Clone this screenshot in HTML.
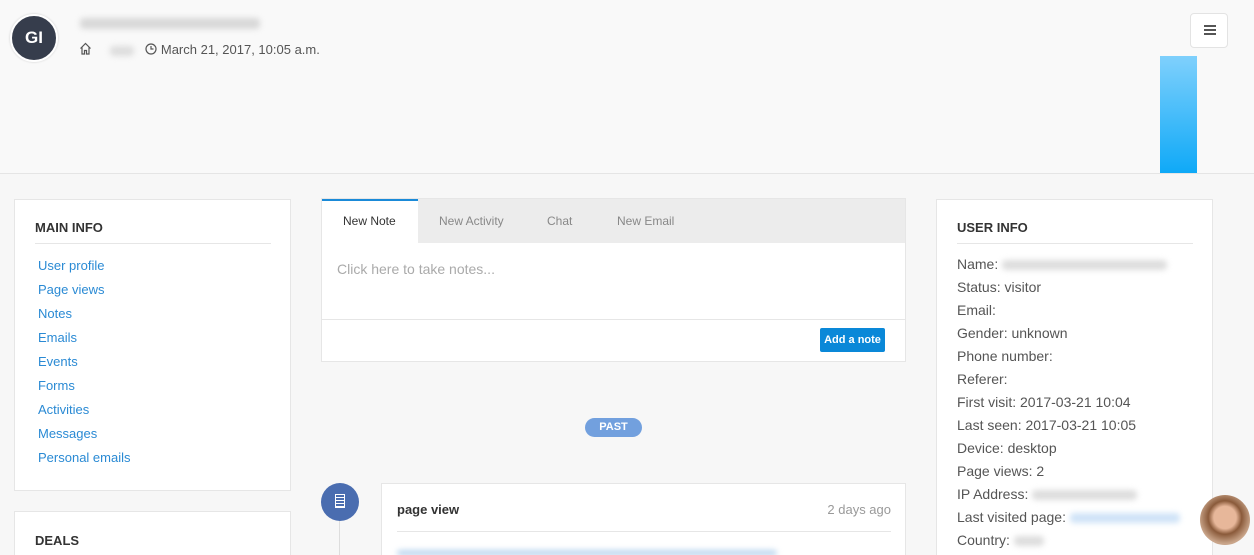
<!DOCTYPE html><html><head><style>
html,body{margin:0;width:1254px;height:555px;overflow:hidden}
body{background:#f7f7f7;font-family:"Liberation Sans",sans-serif;position:relative}
*{box-sizing:border-box}
.a{position:absolute}
.panel{position:absolute;background:#fff;border:1px solid #e6e6e6}
.blur{display:inline-block;background:#ddd;filter:blur(3px);border-radius:4px;vertical-align:middle}
.links div{color:#2a8ad4;font-size:13px;height:24px}
.info div{color:#555;font-size:14px;height:23px}
.t{font-size:13px;font-weight:bold;color:#333}
</style></head><body>
<div class="a" style="left:0;top:0;width:1254px;height:174px;background:#f9f9f9;border-bottom:1px solid #e5e5e5"></div>
<div class="a" style="left:10px;top:14px;width:48px;height:48px;border-radius:50%;background:#363d4c;border:2px solid #fff;box-shadow:0 0 2px #ccc;color:#fff;font-weight:bold;font-size:17px;line-height:44px;text-align:center">GI</div>
<div class="a blur" style="left:80px;top:18px;width:180px;height:11px;background:#d8d8d8"></div>
<div class="a" style="left:79px;top:42px;font-size:13px;color:#555">
<svg width="13" height="13" viewBox="0 0 13 13" style="vertical-align:-1px"><path d="M1.5 6.5L6.5 1.5L11.5 6.5M3 5.5V12H5.5V8.5H7.5V12H10V5.5" fill="none" stroke="#555" stroke-width="1.2"/></svg>
<span class="blur" style="width:24px;height:10px;margin:0 8px 0 14px"></span>
<svg width="12" height="12" viewBox="0 0 12 12" style="vertical-align:-1px"><circle cx="6" cy="6" r="5" fill="none" stroke="#555" stroke-width="1.2"/><path d="M6 3V6H8.5" fill="none" stroke="#555" stroke-width="1.2"/></svg>
March 21, 2017, 10:05 a.m.</div>
<div class="a" style="left:1190px;top:13px;width:38px;height:35px;background:#fff;border:1px solid #e3e3e3;border-radius:4px"><div style="margin:11px 0 0 13px;width:12px;height:2px;background:#555;box-shadow:0 4px #555,0 8px #555"></div></div>
<div class="a" style="left:1160px;top:56px;width:37px;height:117px;background:linear-gradient(#7fd0fc,#0fa9f7)"></div>

<div class="panel" style="left:14px;top:199px;width:277px;height:292px">
<div class="a t" style="left:20px;top:20px">MAIN INFO</div>
<div class="a" style="left:20px;top:43px;width:236px;border-top:1px solid #e6e6e6"></div>
<div class="a links" style="left:23px;top:58px"><div>User profile</div><div>Page views</div><div>Notes</div><div>Emails</div><div>Events</div><div>Forms</div><div>Activities</div><div>Messages</div><div>Personal emails</div></div>
</div>
<div class="panel" style="left:14px;top:511px;width:277px;height:60px"><div class="a t" style="left:20px;top:21px">DEALS</div></div>

<div class="panel" style="left:321px;top:198px;width:585px;height:164px">
<div class="a" style="left:0;top:0;width:583px;height:44px;background:#ececec"></div>
<div class="a" style="left:0;top:0;width:96px;height:44px;background:#fff;border-top:2px solid #1a8ad8"></div>
<div class="a" style="left:21px;top:15px;font-size:12px;color:#333">New Note</div>
<div class="a" style="left:117px;top:15px;font-size:12px;color:#888">New Activity</div>
<div class="a" style="left:225px;top:15px;font-size:12px;color:#888">Chat</div>
<div class="a" style="left:295px;top:15px;font-size:12px;color:#888">New Email</div>
<div class="a" style="left:15px;top:62px;font-size:14px;color:#aaa">Click here to take notes...</div>
<div class="a" style="left:0;top:120px;width:583px;border-top:1px solid #e6e6e6"></div>
<div class="a" style="left:498px;top:129px;width:65px;height:24px;background:#0a88d8;border-radius:2px;color:#fff;font-size:11px;font-weight:bold;line-height:24px;text-align:center">Add a note</div>
</div>

<div class="a" style="left:585px;top:418px;width:57px;height:19px;border-radius:10px;background:#72a0de;color:#fff;font-size:11px;font-weight:bold;line-height:19px;text-align:center">PAST</div>
<div class="a" style="left:339px;top:520px;width:1px;height:40px;background:#ddd"></div>
<div class="a" style="left:321px;top:483px;width:38px;height:38px;border-radius:50%;background:#4a6db0"><div style="margin:11px 0 0 14px;width:10px;height:14px;border:1.5px solid #fff;background:repeating-linear-gradient(#4a6db0 0 2px,#fff 2px 3px)"></div></div>
<div class="panel" style="left:381px;top:483px;width:525px;height:90px">
<div class="a" style="left:15px;top:18px;font-size:13px;font-weight:bold;color:#333">page view</div>
<div class="a" style="right:14px;top:18px;font-size:13px;color:#999">2 days ago</div>
<div class="a" style="left:15px;top:47px;width:494px;border-top:1px solid #e6e6e6"></div>
<div class="a blur" style="left:15px;top:66px;width:380px;height:6px;background:#bcd6ee"></div>
</div>

<div class="panel" style="left:936px;top:199px;width:277px;height:380px">
<div class="a t" style="left:20px;top:20px">USER INFO</div>
<div class="a" style="left:20px;top:43px;width:236px;border-top:1px solid #e6e6e6"></div>
<div class="a info" style="left:20px;top:56px;white-space:nowrap">
<div>Name: <span class="blur" style="width:165px;height:10px"></span></div><div>Status: visitor</div><div>Email:</div><div>Gender: unknown</div><div>Phone number:</div><div>Referer:</div><div>First visit: 2017-03-21 10:04</div><div>Last seen: 2017-03-21 10:05</div><div>Device: desktop</div><div>Page views: 2</div><div>IP Address: <span class="blur" style="width:105px;height:10px"></span></div><div>Last visited page: <span class="blur" style="width:110px;height:10px;background:#cfe3f7"></span></div><div>Country: <span class="blur" style="width:30px;height:10px"></span></div>
</div></div>
<div class="a" style="left:1200px;top:495px;width:50px;height:50px;border-radius:50%;background:radial-gradient(circle at 50% 45%,#e7b79a 0 30%,#8a5a3a 45%,#c9a58a 70%)"></div>
</body></html>
